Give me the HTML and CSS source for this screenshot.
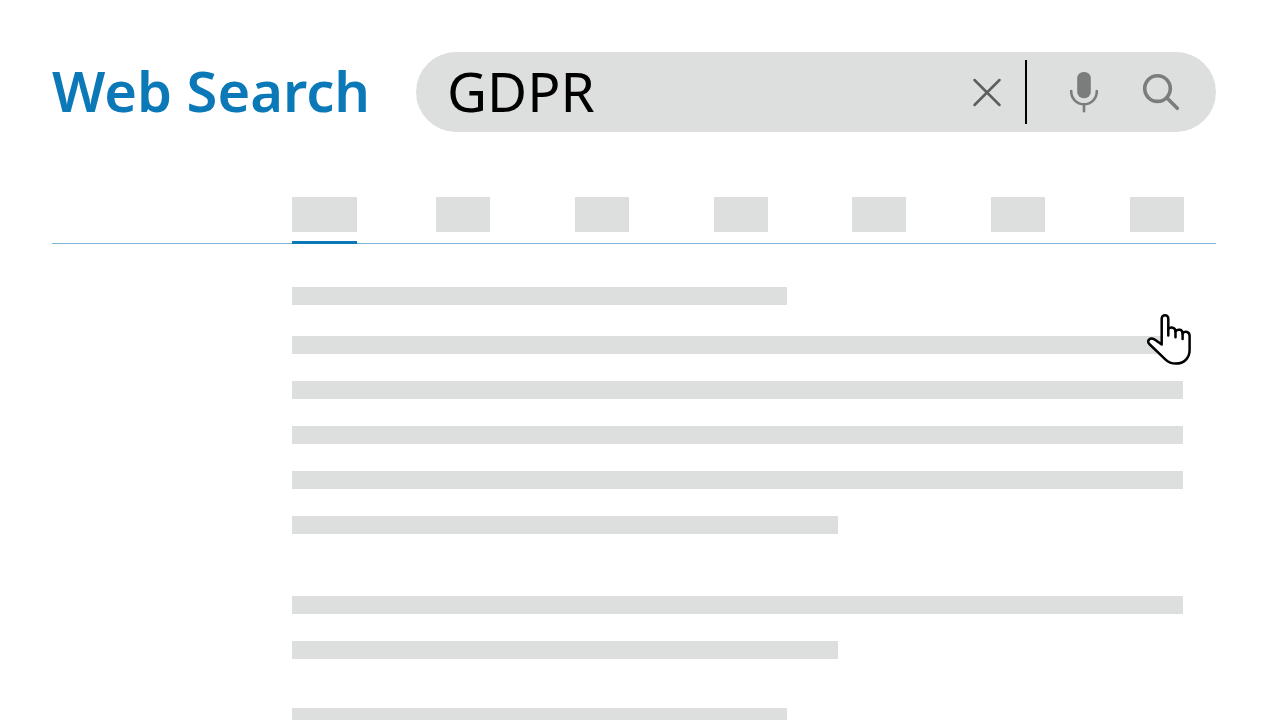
FILE: index.html
```
<!DOCTYPE html>
<html lang="en">
<head>
    <meta charset="UTF-8">
    <meta name="viewport" content="width=device-width, initial-scale=1.0">
    <title>Web Search</title>
    <link rel="stylesheet" href="styles.css">
</head>
<body>
    <header class="header">
        <h1 class="brand">Web Search</h1>
        <form class="search" role="search">
            <input class="search-input" type="text" value="GDPR" aria-label="Search the web">
            <button class="icon-btn" type="reset" aria-label="Clear">
                <svg width="40" height="44" viewBox="0 0 40 44" fill="none" stroke="#5c5e5e" stroke-width="2.5" stroke-linecap="round">
                    <path d="M7.5 10L32.5 35M32.5 10L7.5 35"/>
                </svg>
            </button>
            <span class="divider"></span>
            <button class="icon-btn" type="button" aria-label="Search by voice">
                <svg width="40" height="44" viewBox="0 0 40 44" fill="none" stroke="#7b7d7d" stroke-width="2.6">
                    <rect x="13.2" y="2" width="13.6" height="26.2" rx="6.3" fill="#7b7d7d" stroke="none"/>
                    <path d="M7.2 21v.5a12.8 12.8 0 0 0 25.6 0V21" stroke-linecap="round"/>
                    <path d="M20 34v8.3"/>
                </svg>
            </button>
            <button class="icon-btn" type="submit" aria-label="Search">
                <svg width="40" height="44" viewBox="0 0 40 44" fill="none" stroke="#7b7d7d" stroke-width="3.6" stroke-linecap="round">
                    <circle cx="16.5" cy="18.6" r="12.8"/>
                    <path d="M26 28L36.3 38.3"/>
                </svg>
            </button>
        </form>
    </header>

    <nav class="tabs" aria-label="Result types">
        <a class="tab active" href="#" aria-label="All"></a>
        <div class="tab-list">
            <a class="tab" href="#" aria-label="Images"></a>
            <a class="tab" href="#" aria-label="Videos"></a>
            <a class="tab" href="#" aria-label="News"></a>
            <a class="tab" href="#" aria-label="Maps"></a>
            <a class="tab" href="#" aria-label="Books"></a>
            <a class="tab" href="#" aria-label="More"></a>
        </div>
    </nav>

    <main class="results">
        <section class="result">
            <div class="bar title"></div>
            <div class="bar"></div>
            <div class="bar"></div>
            <div class="bar"></div>
            <div class="bar"></div>
            <div class="bar short"></div>
        </section>
        <section class="result">
            <div class="bar"></div>
            <div class="bar short"></div>
        </section>
        <section class="result">
            <div class="bar title"></div>
        </section>

        <!-- hand pointer -->
        <svg class="pointer" width="48" height="56" viewBox="0 0 48 56" fill="#fff" stroke="#000" stroke-width="2.5" stroke-linejoin="round" stroke-linecap="round">
            <path d="M16.7 32.5V6.5a3.3 3.3 0 0 1 6.6 0V17C25.5 14.6 30.5 15 30.5 19.5C32.7 16.6 37.6 17.3 37.6 21.5C40 18.7 44.6 19.6 44.6 24V38C44.6 46.5 38.5 51.6 31 51.6C26.5 51.6 23 50 20.3 47.3L4.3 32C1 28.4 5.5 25.3 9.3 27.3Z"/>
            <path d="M23.3 17V23.5M30.5 19.5V25.2M37.6 21.5V27" fill="none"/>
        </svg>
    </main>
</body>
</html>
```
FILE: styles.css
```
* {
    box-sizing: border-box;
}

body {
    margin: 0;
    padding: 52px 64px 0 52px;
    height: 100vh;
    overflow: hidden;
    background: #fff;
    color: #000;
    font-family: "Noto Sans", "Open Sans", sans-serif;
}

.header {
    display: flex;
    align-items: flex-start;
}

.brand {
    flex: 0 0 364px;
    margin: 0;
    color: #0b78b8;
    font-size: 56px;
    font-weight: 600;
    line-height: 76px;
    white-space: nowrap;
}

.search {
    flex: 1;
    min-width: 0;
    height: 80px;
    display: flex;
    align-items: center;
    padding: 0 35px 0 31px;
    border-radius: 40px;
    background: #dddfde;
}

.search-input {
    flex: 1;
    align-self: flex-start;
    min-width: 0;
    height: 76px;
    padding: 0;
    border: 0;
    outline: 0;
    background: none;
    color: #000;
    font-family: inherit;
    font-size: 55px;
}

.icon-btn {
    flex: none;
    padding: 0;
    border: 0;
    background: none;
    cursor: pointer;
}

.icon-btn svg {
    display: block;
}

.icon-btn + .icon-btn {
    margin-left: 37px;
}

.divider {
    width: 2px;
    height: 64px;
    margin: 0 37px 0 18px;
    background: #000;
}

.tabs {
    display: flex;
    margin-top: 65px;
    padding: 0 32px 0 240px;
    border-bottom: 1px solid #7fb5d5;
}

.tab-list {
    flex: 1;
    display: flex;
    justify-content: space-between;
    margin-left: 79px;
}

.tab {
    width: 54px;
    height: 35px;
    background: #dddfde;
}

.tab.active {
    width: 65px;
    height: 47px;
    margin-bottom: -1px;
    border-bottom: 3px solid #0b78b8;
    background: linear-gradient(#dddfde, #dddfde) no-repeat 0 0 / 100% 35px;
}

.results {
    position: relative;
    margin: 43px 33px 0 240px;
}

.result {
    display: flex;
    flex-direction: column;
    gap: 27px;
    margin-bottom: 62px;
}

.result + .result {
    margin-bottom: 49px;
}

.bar {
    height: 18px;
    background: #dddfde;
}

.bar.title {
    width: 495px;
    margin-bottom: 4px;
}

.bar.short {
    width: 546px;
}

.pointer {
    position: absolute;
    top: 25px;
    right: -10px;
}
```
